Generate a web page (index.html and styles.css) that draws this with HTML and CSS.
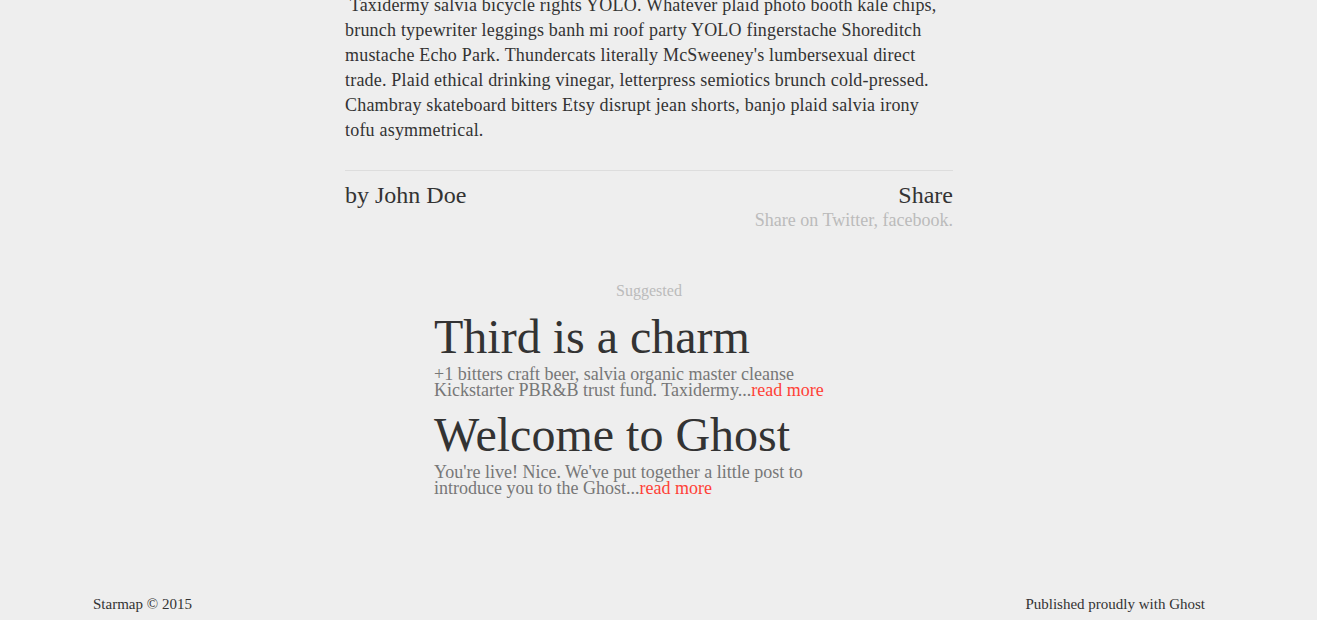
FILE: index.html
```html
<!DOCTYPE html>
<html lang="en">
<head>
<meta charset="utf-8">
<title>Starmap</title>
<link rel="stylesheet" href="styles.css">
</head>
<body>
<div class="page">
  <article class="post">
    <p class="post-text">&nbsp;Taxidermy salvia bicycle rights YOLO. Whatever plaid photo booth kale chips, brunch typewriter leggings banh mi roof party YOLO fingerstache Shoreditch mustache Echo Park. Thundercats literally McSweeney's lumbersexual direct trade. Plaid ethical drinking vinegar, letterpress semiotics brunch cold-pressed. Chambray skateboard bitters Etsy disrupt jean shorts, banjo plaid salvia irony tofu asymmetrical.</p>
    <div class="post-meta">
      <div class="author">by John Doe</div>
      <div class="share">
        <div class="share-title">Share</div>
        <div class="share-links">Share on <a href="#">Twitter</a>, <a href="#">facebook</a>.</div>
      </div>
    </div>
  </article>
  <section class="suggested">
    <div class="suggested-label">Suggested</div>
    <div class="suggestion">
      <h2 class="suggestion-title">Third is a charm</h2>
      <p class="suggestion-excerpt">+1 bitters craft beer, salvia organic master cleanse Kickstarter PBR&amp;B trust fund. Taxidermy...<a href="#" class="read-more">read more</a></p>
    </div>
    <div class="suggestion">
      <h2 class="suggestion-title">Welcome to Ghost</h2>
      <p class="suggestion-excerpt">You're live! Nice. We've put together a little post to introduce you to the Ghost...<a href="#" class="read-more">read more</a></p>
    </div>
  </section>
  <footer class="site-footer">
    <span>Starmap © 2015</span>
    <span>Published proudly with Ghost</span>
  </footer>
</div>
</body>
</html>
```

FILE: styles.css
```css
html, body {
  margin: 0;
  padding: 0;
  background: #eeeeee;
}
body {
  font-family: "Liberation Serif", "Times New Roman", serif;
  color: #333333;
  height: 620px;
  overflow: hidden;
}
a {
  color: inherit;
  text-decoration: none;
}
.page {
  width: 1298px;
}
.post {
  width: 608px;
  margin: 0 auto;
}
.post-text {
  margin: -7px 0 0;
  font-size: 18px;
  line-height: 25px;
  letter-spacing: 0.2px;
  padding-bottom: 27px;
  border-bottom: 1px solid #dddddd;
}
.post-meta {
  display: flex;
  justify-content: space-between;
  align-items: flex-start;
  padding-top: 11px;
}
.author {
  font-size: 24px;
  line-height: 26px;
}
.share {
  text-align: right;
}
.share-title {
  font-size: 24px;
  line-height: 26px;
}
.share-links {
  font-size: 18px;
  line-height: 24px;
  color: #bbbbbb;
}
.suggested {
  width: 430px;
  margin: 50px auto 0;
}
.suggested-label {
  text-align: center;
  font-size: 16px;
  line-height: 18px;
  color: #bbbbbb;
}
.suggestion-title {
  margin: 10px 0 0;
  font-weight: normal;
  font-size: 48px;
  line-height: 54px;
  color: #333333;
}
.suggestion-excerpt {
  margin: 2px 0 0;
  font-size: 18px;
  line-height: 16px;
  color: #777777;
}
.read-more {
  color: #ff4136;
}
.site-footer {
  width: 1112px;
  margin: 99px auto 0;
  display: flex;
  justify-content: space-between;
  font-size: 15px;
  line-height: 18px;
  color: #333333;
}
```
